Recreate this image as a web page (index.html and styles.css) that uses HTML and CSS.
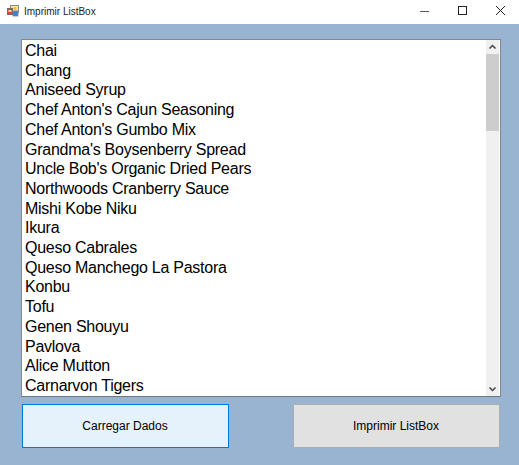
FILE: index.html
```html
<!DOCTYPE html>
<html lang="pt">
<head>
<meta charset="utf-8">
<title>Imprimir ListBox</title>
<link rel="stylesheet" href="styles.css">
</head>
<body>
<div class="window">
  <header class="titlebar">
    <svg class="app-icon" width="12" height="12" viewBox="0 0 12 12">
      <rect x="3.500" y="0.500" width="8" height="7" fill="#f3e6b0" stroke="#8a8a8a"/>
      <rect x="0.500" y="3.500" width="5" height="6" fill="#d8432f" stroke="#7d6a60"/>
      <rect x="1.500" y="5" width="3" height="2" fill="#f6d8c8"/>
      <rect x="6" y="6" width="5" height="5" fill="#3f7fd0" stroke="#6b7fa0" stroke-width="0.800"/>
      <rect x="6.500" y="2" width="3" height="3" fill="#f2c230"/>
    </svg>
    <span class="title">Imprimir ListBox</span>
    <div class="controls">
      <svg class="ctl" width="38" height="24" viewBox="0 0 38 24"><path d="M14 11.500h9" stroke="#555" stroke-width="1" fill="none"/></svg>
      <svg class="ctl" width="38" height="24" viewBox="0 0 38 24"><rect x="14.500" y="6.500" width="8" height="8" stroke="#222" stroke-width="1" fill="none"/></svg>
      <svg class="ctl" width="38" height="24" viewBox="0 0 38 24"><path d="M14 6l9 9M23 6l-9 9" stroke="#222" stroke-width="1" fill="none"/></svg>
    </div>
  </header>
  <main class="client">
    <div class="listbox">
      <ul class="items">
        <li>Chai</li>
        <li>Chang</li>
        <li>Aniseed Syrup</li>
        <li>Chef Anton's Cajun Seasoning</li>
        <li>Chef Anton's Gumbo Mix</li>
        <li>Grandma's Boysenberry Spread</li>
        <li>Uncle Bob's Organic Dried Pears</li>
        <li>Northwoods Cranberry Sauce</li>
        <li>Mishi Kobe Niku</li>
        <li>Ikura</li>
        <li>Queso Cabrales</li>
        <li>Queso Manchego La Pastora</li>
        <li>Konbu</li>
        <li>Tofu</li>
        <li>Genen Shouyu</li>
        <li>Pavlova</li>
        <li>Alice Mutton</li>
        <li>Carnarvon Tigers</li>
      </ul>
      <div class="scrollbar">
        <svg class="arrow" width="13" height="14" viewBox="0 0 13 14"><path d="M3.500 8.500l3-3 3 3" stroke="#444" stroke-width="1.500" fill="none"/></svg>
        <div class="thumb"></div>
        <div class="track"></div>
        <svg class="arrow" width="13" height="14" viewBox="0 0 13 14"><path d="M3.500 5.500l3 3 3-3" stroke="#444" stroke-width="1.500" fill="none"/></svg>
      </div>
    </div>
    <div class="actions">
      <button class="btn btn-focus" type="button">Carregar Dados</button>
      <button class="btn" type="button">Imprimir ListBox</button>
    </div>
  </main>
</div>
</body>
</html>
```
FILE: styles.css
```css
html, body {
  margin: 0;
  padding: 0;
  height: 100%;
}
body {
  font-family: "Liberation Sans", Arial, sans-serif;
  overflow: hidden;
}
.window {
  width: 519px;
  height: 465px;
  display: flex;
  flex-direction: column;
  background: #99b4d1;
}
.titlebar {
  height: 24px;
  flex: none;
  background: #fff;
  display: flex;
  align-items: center;
  padding-left: 7px;
}
.app-icon {
  flex: none;
  margin-top: -2px;
}
.title {
  font-size: 10px;
  margin-left: 5px;
  color: #222;
  margin-top: -1px;
}
.controls {
  margin-left: auto;
  display: flex;
  margin-right: -1px;
}
.ctl {
  display: block;
}
.client {
  flex: 1;
  display: flex;
  flex-direction: column;
  padding: 15px 18px 0 21px;
}
.listbox {
  height: 358px;
  box-sizing: border-box;
  border: 1px solid #828790;
  border-bottom-color: #6f7780;
  background: #fff;
  display: flex;
  justify-content: space-between;
}
.items {
  list-style: none;
  margin: 0;
  padding: 1px 0 0 3px;
  font-size: 16px;
  letter-spacing: -0.26px;
  line-height: 19.7px;
  color: #000;
  white-space: nowrap;
  overflow: hidden;
}
.scrollbar {
  width: 13px;
  flex: none;
  margin: 0 1px 0 0;
  padding: 0;
  background: #f0f0f0;
  display: flex;
  flex-direction: column;
}
.arrow {
  display: block;
  flex: none;
}
.thumb {
  height: 77px;
  background: #cdcdcd;
  flex: none;
}
.track {
  flex: 1;
}
.actions {
  display: flex;
  justify-content: space-between;
  margin-top: 7px;
  padding: 0 1px;
}
.btn {
  width: 207px;
  height: 44px;
  box-sizing: border-box;
  border: 1px solid #adadad;
  background: #e1e1e1;
  font-family: "Liberation Sans", Arial, sans-serif;
  font-size: 12px;
  color: #000;
  padding: 0 1px 0 0;
}
.btn-focus {
  border-color: #0078d7;
  background: #e5f1fb;
}
```
